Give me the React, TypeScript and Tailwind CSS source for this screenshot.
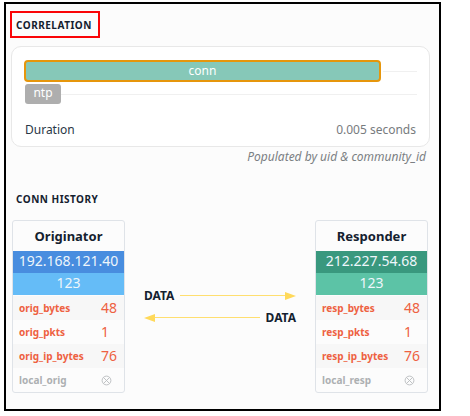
type Field = { name: string; value: string | null };

type HostProps = {
  title: string;
  address: string;
  port: string;
  addressClass: string;
  portClass: string;
  fields: Field[];
};

const originatorFields: Field[] = [
  { name: 'orig_bytes', value: '48' },
  { name: 'orig_pkts', value: '1' },
  { name: 'orig_ip_bytes', value: '76' },
  { name: 'local_orig', value: null },
];

const responderFields: Field[] = [
  { name: 'resp_bytes', value: '48' },
  { name: 'resp_pkts', value: '1' },
  { name: 'resp_ip_bytes', value: '76' },
  { name: 'local_resp', value: null },
];

function EmptyValue() {
  return (
    <svg className="block size-[11px]" viewBox="0 0 11 11" fill="none" stroke="#b9bcbe" strokeWidth="0.9" role="img" aria-label="unset">
      <circle cx="5.5" cy="5.5" r="4.4" />
      <path d="M2.4 2.4l6.2 6.2M8.6 2.4L2.4 8.6" />
    </svg>
  );
}

function HostCard({ title, address, port, addressClass, portClass, fields }: HostProps) {
  return (
    <article className="w-[113px] shrink-0 overflow-hidden rounded-[3px] border border-[#dfe3e8] bg-[#fcfcfc]">
      <h3 className="h-[30px] text-center text-[13px] leading-[30px] font-bold text-[#14212f]">{title}</h3>
      <p className={`h-[22px] text-center text-[14px] leading-[20px] text-[#eef6fb] ${addressClass}`}>{address}</p>
      <p className={`h-[22px] text-center text-[14px] leading-[20px] text-[#eef6fb] ${portClass}`}>{port}</p>
      <table className="mt-px w-full table-fixed border-collapse">
        <tbody>
          {fields.map((field) => (
            <tr key={field.name} className="h-6 odd:bg-[#f7f7f7]">
              <th
                scope="row"
                className={`w-[88px] p-0 pl-[6px] text-left text-[10px] leading-[20px] font-bold ${field.value === null ? 'text-[#adb0b2]' : 'text-[#ee6141]'}`}
              >
                {field.name}
              </th>
              <td className="p-0 text-[14px] leading-[20px] text-[#ee6141]">
                {field.value ?? <EmptyValue />}
              </td>
            </tr>
          ))}
        </tbody>
      </table>
    </article>
  );
}

function Arrow({ left = false }: { left?: boolean }) {
  return (
    <span className={`flex flex-1 items-center ${left ? 'flex-row-reverse' : ''}`}>
      <span className="h-px flex-1 bg-[#ffdf70]" />
      <svg className={`h-2 w-[11px] ${left ? 'rotate-180' : ''}`} viewBox="0 0 11 8" fill="#ffd95a" aria-hidden="true">
        <path d="M0 0L11 4L0 8Z" />
      </svg>
    </span>
  );
}

export default function App() {
  return (
    <main className="bg-white pt-[2px] pr-[29px] pb-[5px] pl-1 font-['Noto_Sans','Open_Sans',sans-serif]">
      <div className="border-2 border-black bg-[#fcfcfc] pt-[7px] pr-[9px] pb-4 pl-[5px]">
        <section>
          <h2 className="ml-[-1px] block w-fit border-2 border-[#fa0508] pt-0.5 pr-1.5 pl-1 text-[10px] leading-[21px] font-bold tracking-wider text-[#14212f]">
            CORRELATION
          </h2>
          <div className="mt-2 rounded-[10px] border border-[#e8e8e8] bg-white px-3 pt-[13px] pb-[7px]">
            <div className="flex items-center">
              <div className="mr-0.5 h-[22px] w-[357px] rounded-[4px] border-2 border-[#e6960c] bg-[#86c8b8] text-center text-[12px] leading-[17px] text-white">
                conn
              </div>
              <div className="h-px flex-1 bg-[#f0f0f0]" />
            </div>
            <div className="mt-0.5 flex items-center">
              <div className="ml-px h-5 w-9 rounded-[3px] bg-[#aeaeae] text-center text-[12px] leading-[18px] text-white">
                ntp
              </div>
              <div className="h-px flex-1 bg-[#f0f0f0]" />
            </div>
            <dl className="mt-[17px] flex justify-between px-px text-[12px] leading-[18px]">
              <dt className="text-[#293746]">Duration</dt>
              <dd className="text-[#777b7e]">0.005 seconds</dd>
            </dl>
          </div>
          <p className="mt-px pr-1 text-right text-[12px] leading-[18px] text-[#7b7f83] italic">
            Populated by uid &amp; community_id
          </p>
        </section>

        <section className="mt-[22px]">
          <h2 className="px-[5px] text-[10px] leading-[23px] font-bold tracking-wider text-[#14212f]">CONN HISTORY</h2>
          <div className="mt-[9px] flex items-center pr-0.5 pl-px">
            <HostCard
              title="Originator"
              address="192.168.121.40"
              port="123"
              addressClass="bg-[#488ddf]"
              portClass="bg-[#65bcf7]"
              fields={originatorFields}
            />
            <div className="flex flex-1 flex-col px-[19px] text-[12px] leading-[22px] font-bold text-[#14212f]">
              <div className="flex gap-[6px]">
                <span>DATA</span>
                <Arrow />
              </div>
              <div className="flex gap-[6px]">
                <Arrow left />
                <span>DATA</span>
              </div>
            </div>
            <HostCard
              title="Responder"
              address="212.227.54.68"
              port="123"
              addressClass="bg-[#39987e]"
              portClass="bg-[#5cc3a6]"
              fields={responderFields}
            />
          </div>
        </section>
      </div>
    </main>
  );
}
